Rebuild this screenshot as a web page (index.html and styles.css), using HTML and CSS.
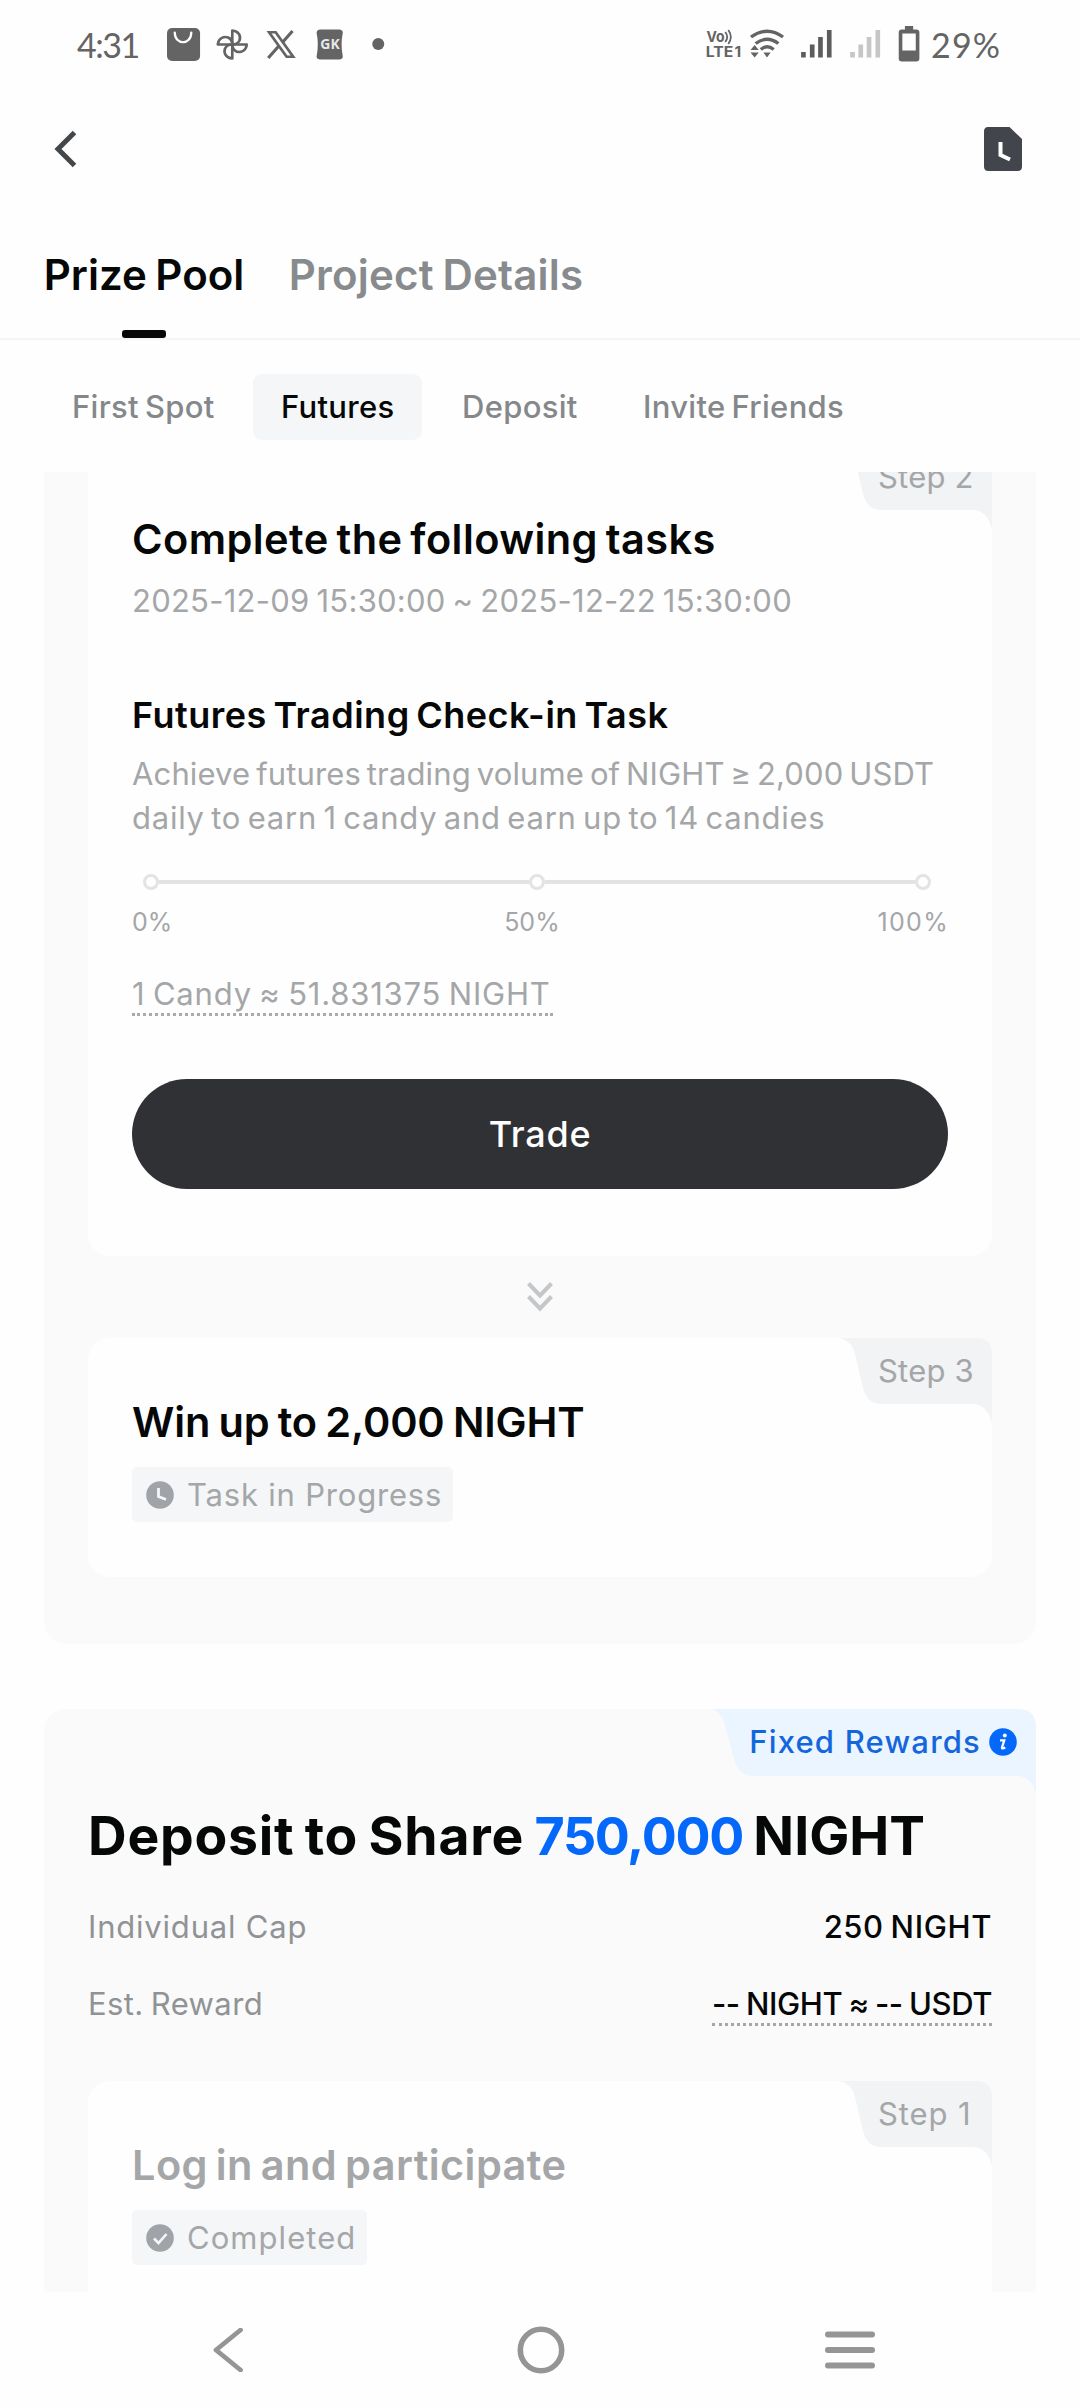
FILE: index.html
```html
<!DOCTYPE html>
<html lang="en">
<head>
<meta charset="utf-8">
<title>Prize Pool</title>
<link rel="stylesheet" href="styles.css">
</head>
<body>
<div class="statusbar">
  <span class="clock">4:31</span>
  <svg class="notif-icons" width="219" height="36" viewBox="0 0 212 36" preserveAspectRatio="none">
    <rect x="0" y="1" width="32" height="33" rx="5" fill="#646464"/>
    <path d="M7.5 5.5C7.5 18.500 23.500 18.500 23.500 5.500" fill="none" stroke="#fff" stroke-width="2.200" stroke-linecap="round"/>
    <g fill="none" stroke="#646464" stroke-width="2.600" stroke-linejoin="round" transform="translate(63.200 17.500)">
      <path d="M0 0V-14C6.500-13.500 8.500-8 7-4C5.800-1.500 3 0 0 0Z"/>
      <path d="M0 0H14C13.500 6.500 8 8.500 4 7C1.500 5.800 0 3 0 0Z"/>
      <path d="M0 0V14C-6.500 13.500-8.500 8-7 4C-5.800 1.500-3 0 0 0Z"/>
      <path d="M0 0H-14C-13.500-6.500-8-8.500-4-7C-1.500-5.800 0-3 0 0Z"/>
    </g>
    <g fill="none" stroke="#646464" stroke-width="2.600">
      <path d="M98.800 5.200H105.200L122.200 29.800H115.800Z"/>
      <path d="M121.500 4L111.500 15.800M108 19.200L98 31" stroke-width="3"/>
    </g>
    <path d="M148 2.500H167Q171 3 170 7Q168 17 170 28Q171 32 167 32.500H148Q144 32 145 28Q147 17 145 7Q144 3 148 2.500Z" fill="#646464"/>
    <text x="157.800" y="22.500" text-anchor="middle" class="gk">GK</text>
    <ellipse cx="204.500" cy="17" rx="5.800" ry="6" fill="#646464"/>
  </svg>
  <svg class="system-icons" width="219" height="40" viewBox="700 24 212 40" preserveAspectRatio="none">
    <g class="volte">
      <text x="702.500" y="42.500" textLength="17.500" lengthAdjust="spacingAndGlyphs">Vo</text>
      <text x="701.800" y="57.200" textLength="26.500" lengthAdjust="spacingAndGlyphs">LTE</text>
      <text x="729.500" y="57.200">1</text>
    </g>
    <g fill="none" stroke="#646464" stroke-width="1.700">
      <path d="M720.500 32Q724.500 37 720.500 42M723.500 30Q728.500 37 723.500 44"/>
    </g>
    <g fill="none" stroke="#646464" stroke-width="3.200">
      <path d="M745.500 37Q761 25.500 776.500 37"/>
      <path d="M750 43.500Q761 35 772 43.500"/>
      <path d="M755 49.500Q761 44 767.500 49.500"/>
    </g>
    <path d="M757.500 52.500H764.500L761 57.500ZM745 50L749 45L753 50ZM745 52.500L749 57.500L753 52.500Z" fill="#646464"/>
    <path d="M794 52h4.500v5.500h-4.500zM802.500 44.500h4.500v13h-4.500zM810.500 37h4.500v20.500h-4.500zM819 30h4.500v27.500h-4.500z" fill="#5c5c5c"/>
    <path d="M841.500 52h4.500v5.500h-4.500zM849.500 44.500h4.500v13h-4.500zM857.500 37h4.500v20.500h-4.500zM866 30h4.500v27.500h-4.500z" fill="#c6c6c6"/>
    <path fill-rule="evenodd" d="M894.500 26h8v3.500h3q3 0 3 3v26q0 3-3 3h-14q-3 0-3-3v-26q0-3 3-3h3zM892 33.500v17h13v-17z" fill="#646464"/>
  </svg>
  <span class="battery">29%</span>
</div>

<header class="topbar">
  <svg width="26" height="38" viewBox="0 0 26 38"><path d="M21.500 2.500L5 19L21.500 35.500" fill="none" stroke="#444749" stroke-width="5"/></svg>
  <svg width="40" height="46" viewBox="0 0 40 46"><path d="M5 1H26.500L39 13V40.500Q39 45 34.500 45H5.500Q1 45 1 40.500V5.500Q1 1 5 1Z" fill="#42454c"/><path d="M17.500 16V29L27 33.500" fill="none" stroke="#fff" stroke-width="4"/></svg>
</header>

<nav class="tabs">
  <a class="tab tab-active">Prize Pool</a>
  <a class="tab tab-second">Project Details</a>
</nav>

<nav class="chips">
  <a class="chip chip-first">First Spot</a>
  <a class="chip chip-active">Futures</a>
  <a class="chip chip-deposit">Deposit</a>
  <a class="chip chip-invite">Invite Friends</a>
</nav>

<main class="content">
  <section class="panel panel-futures">
    <article class="card card-tasks">
      <div class="step"><svg width="152" height="86" viewBox="0 0 152 86"><path d="M0 0Q12 3 15 16L23 50Q27 65 40 66H134Q149 68 152 86V16Q152 0 136 0Z"/></svg><span>Step 2</span></div>
      <h2 class="title t-complete">Complete the following tasks</h2>
      <p class="dates">2025-12-09 15:30:00 ~ 2025-12-22 15:30:00</p>
      <h3 class="subtitle">Futures Trading Check-in Task</h3>
      <p class="desc"><span class="desc-a">Achieve futures trading volume of NIGHT ≥ 2,000 USDT</span><br><span class="desc-b">daily to earn 1 candy and earn up to 14 candies</span></p>
      <div class="track"><i></i><b></b><i></i><b></b><i></i></div>
      <div class="track-labels"><span>0%</span><span class="half">50%</span><span class="full">100%</span></div>
      <div class="rate">1 Candy ≈ 51.831375 NIGHT</div>
      <button class="trade">Trade</button>
    </article>
    <svg class="chevrons" width="26" height="30" viewBox="0 0 26 30"><path d="M1.500 1.500L13 13.500L24.500 1.500M1.500 14.500L13 26.500L24.500 14.500" fill="none" stroke="#c3c7c9" stroke-width="4"/></svg>
    <article class="card card-win">
      <div class="step"><svg width="152" height="86" viewBox="0 0 152 86"><path d="M0 0Q12 3 15 16L23 50Q27 65 40 66H134Q149 68 152 86V16Q152 0 136 0Z"/></svg><span>Step 3</span></div>
      <h2 class="title t-win">Win up to 2,000 NIGHT</h2>
      <div class="badge"><svg width="28" height="28" viewBox="0 0 28 28"><circle cx="14" cy="14" r="13.800" fill="#a0a4a8"/><path d="M12.500 7V15.500L20 18.500" fill="none" stroke="#f4f6f8" stroke-width="2.800"/></svg><span>Task in Progress</span></div>
    </article>
  </section>

  <section class="panel panel-deposit">
    <div class="fixed"><svg class="fixed-shape" width="324" height="85" viewBox="0 0 324 85"><path d="M0 0Q10 4 13 16L22 50Q26 66 40 67H308Q320 69 324 85V18Q324 0 306 0Z" fill="#ebf5ff"/></svg>
      <span>Fixed Rewards</span>
      <svg width="28" height="28" viewBox="0 0 28 28"><circle cx="14" cy="14" r="13.800" fill="#0468fb"/><circle cx="15.800" cy="7.500" r="2" fill="#fff"/><path d="M11 12.300H15.300L13 19.300Q12.600 21.500 16.300 19.500" fill="none" stroke="#fff" stroke-width="2.200"/></svg>
    </div>
    <h1>Deposit to Share <em>750,000</em> <span class="symbol">NIGHT</span></h1>
    <div class="row"><span class="r-cap">Individual Cap</span><strong class="v-cap">250 NIGHT</strong></div>
    <div class="row"><span class="r-est">Est. Reward</span><strong class="v-est">-- NIGHT ≈ -- USDT</strong></div>
    <article class="card card-login">
      <div class="step"><svg width="152" height="86" viewBox="0 0 152 86"><path d="M0 0Q12 3 15 16L23 50Q27 65 40 66H134Q149 68 152 86V16Q152 0 136 0Z"/></svg><span class="step-one">Step 1</span></div>
      <h2 class="title t-login">Log in and participate</h2>
      <div class="badge"><svg width="28" height="28" viewBox="0 0 28 28"><circle cx="14" cy="14" r="13.800" fill="#a0a4a8"/><path d="M8 14.500L12.500 19L20.500 10" fill="none" stroke="#f4f6f8" stroke-width="2.600"/></svg><span class="done">Completed</span></div>
    </article>
  </section>
</main>

<footer class="navbar">
  <svg width="30" height="44" viewBox="0 0 30 44"><path d="M27.500 2L3 22L27.500 42" fill="none" stroke="#959595" stroke-width="4.800" stroke-linecap="round" stroke-linejoin="round"/></svg>
  <svg class="nav-home" width="48" height="48" viewBox="0 0 48 48"><circle cx="24" cy="24" r="20.700" fill="none" stroke="#959595" stroke-width="5.600"/></svg>
  <svg width="50" height="38" viewBox="0 0 50 38"><path d="M3 3.500H47M3 19H47M3 34.500H47" stroke="#959595" stroke-width="6" stroke-linecap="round"/></svg>
</footer>
</body>
</html>
```

FILE: styles.css
```css
* { box-sizing: border-box; }
body {
  margin: 0;
  width: 1080px;
  height: 2408px;
  display: flex;
  flex-direction: column;
  overflow: hidden;
  background: #fefefe;
  color: #060707;
  font-family: Inter, "Liberation Sans", sans-serif;
  font-size: 31px;
  line-height: 44px;
  white-space: nowrap;
}
h1, h2, h3, p { margin: 0; }
svg { display: block; flex: none; }

.statusbar {
  height: 90px;
  padding-left: 77px;
  display: flex;
  align-items: center;
  color: #646464;
  font-family: Lato, sans-serif;
  font-size: 34px;
}
.clock { width: 90px; letter-spacing: -1.500px; }
.notif-icons { margin-bottom: 1px; }
.system-icons { margin-left: 318px; margin-bottom: 2px; }
.battery { margin-left: 8px; letter-spacing: 1.200px; }
.gk { font: 700 13.500px "Open Sans", sans-serif; fill: #e8e8e8; }
.volte text { font: 700 15px Inter, sans-serif; fill: #646464; }

.topbar {
  height: 118px;
  padding: 0 57px 0 53px;
  display: flex;
  align-items: center;
  justify-content: space-between;
}

.tabs {
  height: 132px;
  padding-left: 44px;
  display: flex;
  gap: 44px;
  border-bottom: 2px solid #f5f5f6;
  font-size: 42px;
  font-weight: 600;
}
.tab {
  width: 200px;
  display: flex;
  flex-direction: column;
  align-items: center;
  justify-content: space-between;
  padding-top: 45px;
  letter-spacing: 0;
  word-spacing: -2px;
  color: #060707;
}
.tab-active::after { content: ""; width: 44px; height: 8px; border-radius: 3px; background: #060707; }
.tab-second { width: 296px; color: #888b8d; letter-spacing: 0.2px; }

.chips {
  height: 132px;
  padding: 34px 44px;
  display: flex;
  font-weight: 500;
  letter-spacing: 0.3px;
  word-spacing: -2.500px;
  color: #85888a;
}
.chip { height: 66px; padding: 0 28px; line-height: 66px; text-align: center; border-radius: 9px; }
.chip-first { width: 197px; margin-right: 12px; }
.chip-active { width: 169px; margin-right: 12px; background: #f4f6f8; color: #060707; }
.chip-deposit { width: 171px; margin-right: 11px; }
.chip-invite { margin-left: -1px; }

.content { height: 1820px; overflow: hidden; }
.panel { position: relative; margin: 0 44px; padding: 0 44px; background: #fafafa; border-radius: 22px; }
.panel-futures { height: 1200px; margin-top: -28px; }
.panel-deposit { height: 660px; margin-top: 65px; padding-top: 97px; }
.card { position: relative; padding: 0 44px; background: #fefefe; border-radius: 22px; }
.step { position: absolute; top: 0; right: 0; width: 152px; height: 66px; }
.step svg { position: absolute; inset: 0; fill: #f1f3f5; }
.step span { position: absolute; left: 38px; top: 11px; color: #a4a6a8; letter-spacing: 0.2px; }
.step .step-one { letter-spacing: 0.9px; }

.title { font-size: 41.500px; font-weight: 600; line-height: 56px; }
.t-complete { letter-spacing: 0.42px; word-spacing: -3px; }
.t-win { letter-spacing: -0.15px; word-spacing: -2px; }
.t-login { color: #a4a6a8; letter-spacing: 0.42px; word-spacing: -3px; }
.card-tasks { height: 812px; padding-top: 67px; }
.dates { margin-top: 12px; color: #a4a6a8; letter-spacing: 0.25px; word-spacing: -2px; }
.subtitle { margin-top: 70px; font-size: 36px; font-weight: 600; letter-spacing: 0.5px; word-spacing: -3px; }
.desc { margin-top: 15px; color: #a4a6a8; word-spacing: -3px; }
.desc-a { letter-spacing: 0.14px; }
.desc-b { letter-spacing: 0.76px; }
.track { margin: 34px 17px 0 11px; display: flex; align-items: center; }
.track i { width: 16px; height: 16px; border: 3px solid #e3e3e4; border-radius: 50%; }
.track b { flex: 1; height: 4px; background: #e3e3e4; }
.track-labels { margin-top: 10px; display: flex; justify-content: space-between; font-size: 25px; color: #a4a6a8; }
.half { margin-left: 14px; }
.full { letter-spacing: 1.300px; margin-right: -1px; }
.rate {
  width: 421px;
  margin-top: 30px;
  line-height: 39px;
  border-bottom: 3px dotted #a8aaac;
  color: #a4a6a8;
  letter-spacing: 0.8px;
  word-spacing: -2px;
}
.trade {
  display: block;
  width: 816px;
  height: 110px;
  margin-top: 63px;
  border: 0;
  border-radius: 55px;
  background: #303134;
  color: #fff;
  font: 500 36px Inter, sans-serif;
  letter-spacing: 0.7px;
}
.chevrons { margin: 26px auto; }
.card-win { height: 239px; padding-top: 56px; }
.badge {
  display: inline-flex;
  align-items: center;
  gap: 13px;
  height: 55px;
  padding: 0 11px 0 14px;
  margin-top: 17px;
  border-radius: 5px;
  background: #f4f6f8;
  color: #a4a6a8;
  letter-spacing: 0.8px;
}
.done { letter-spacing: 1.050px; }

.fixed {
  position: absolute;
  top: 0;
  right: 0;
  width: 324px;
  height: 66px;
  padding-right: 19px;
  display: flex;
  align-items: center;
  justify-content: flex-end;
  gap: 8px;
  color: #1466dd;
  font-weight: 500;
  letter-spacing: 1.200px;
}
.fixed svg, .fixed span { position: relative; }
.fixed .fixed-shape { position: absolute; inset: 0; }
h1 { height: 60px; font-size: 53.500px; font-weight: 700; line-height: 60px; letter-spacing: 0.75px; word-spacing: -3px; }
h1 em { font-style: normal; color: #0468fb; font-size: 52px; letter-spacing: -1.300px; }
.symbol { letter-spacing: 0; }
.row { height: 77px; display: flex; align-items: center; justify-content: space-between; color: #909395; }
h1 + .row { margin-top: 22px; }
.row strong { font-weight: 500; color: #060707; }
.r-cap { letter-spacing: 0.8px; }
.r-est { letter-spacing: 0.4px; word-spacing: -2px; }
.v-cap { letter-spacing: 0.6px; word-spacing: -2px; }
.row .v-est { margin-top: 3px; line-height: 39px; border-bottom: 3px dotted #a4a6a8; letter-spacing: -0.4px; word-spacing: -1.700px; }
.card-login { height: 300px; margin-top: 39px; padding-top: 56px; }

.navbar {
  height: 116px;
  padding: 0 205px 0 213px;
  display: flex;
  align-items: center;
  justify-content: space-between;
}
.nav-home { margin-left: 13px; }
```
